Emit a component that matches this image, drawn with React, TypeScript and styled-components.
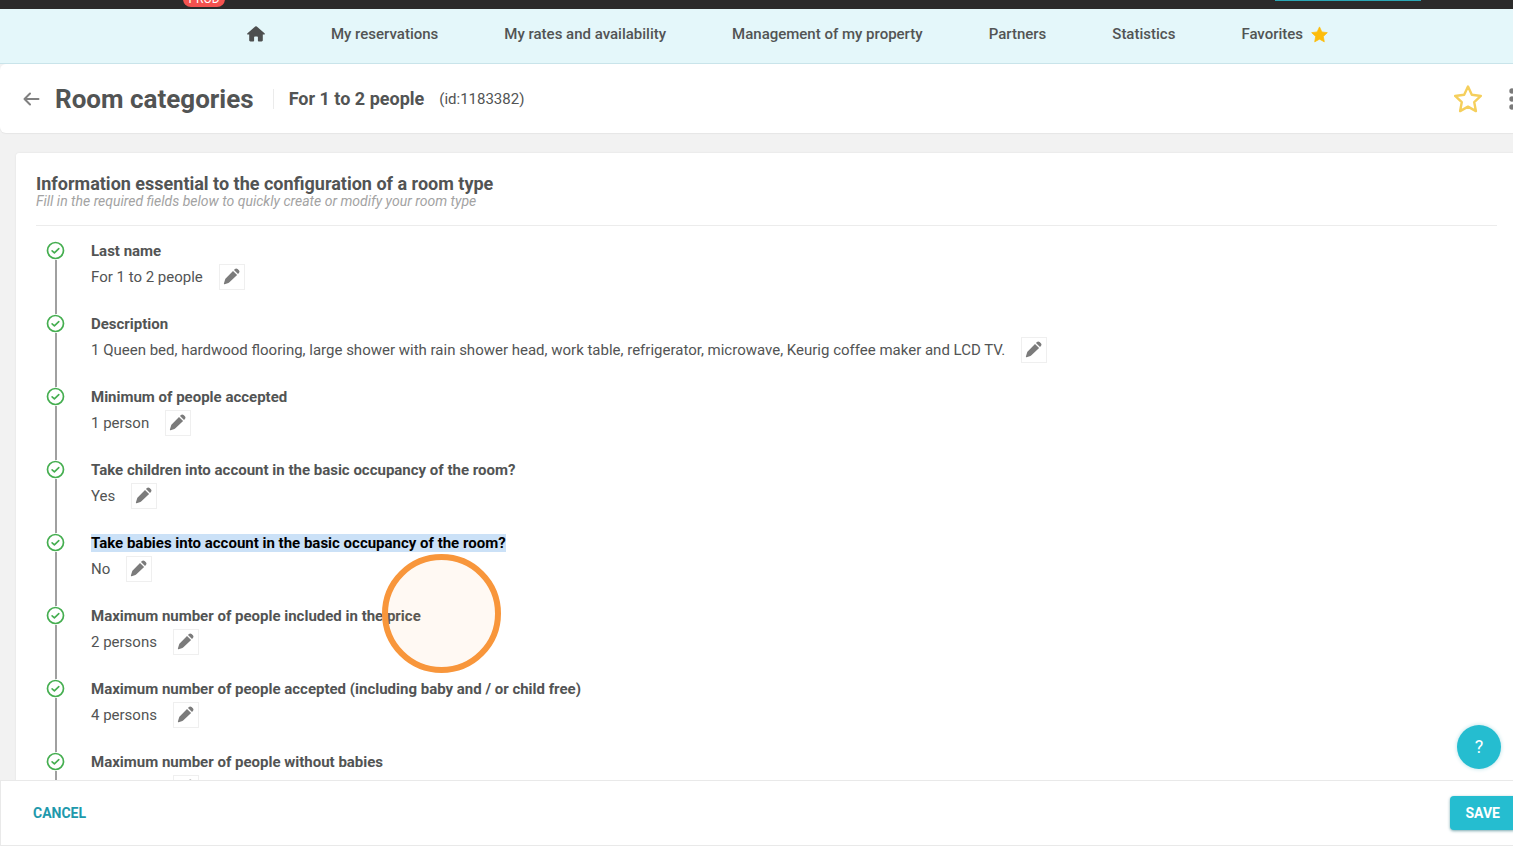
import React from "react";
import styled, { createGlobalStyle } from "styled-components";

const GlobalStyle = createGlobalStyle`
  *, *::before, *::after { box-sizing: border-box; }
  html, body, #root { height: 100%; }
  body {
    margin: 0;
    overflow: hidden;
    background: #f2f2f2;
    color: #525454;
    font-family: Roboto, "Liberation Sans", sans-serif;
    font-size: 15px;
    line-height: 20px;
  }
  button { font: inherit; color: inherit; padding: 0; border: 0; background: none; cursor: pointer; }
  a { color: inherit; text-decoration: none; }
  h1, h2, p, ol { margin: 0; padding: 0; }
  svg { display: block; }
`;

const Viewport = styled.div`
  position: relative;
  height: 100%;
  overflow: hidden;
`;

const Shell = styled.div`
  display: flex;
  flex-direction: column;
  width: calc(100% + 20px);
  height: 100%;
`;

const TopBar = styled.div`
  display: flex;
  flex: none;
  justify-content: space-between;
  align-items: flex-end;
  height: 9px;
  padding: 0 112px 0 183px;
  background: #2b2b2b;
`;

const EnvBadge = styled.span`
  display: flex;
  justify-content: center;
  align-items: center;
  width: 42px;
  height: 16px;
  margin-bottom: 2px;
  border-radius: 8px;
  background: #f4524f;
  color: #fff;
  font-size: 12px;
  line-height: 16px;
`;

const TopAction = styled.span`
  align-self: flex-start;
  width: 146px;
  height: 1px;
  background: #2aa7b5;
`;

const Nav = styled.nav`
  display: flex;
  flex: none;
  justify-content: center;
  align-items: center;
  gap: 66px;
  height: 55px;
  padding: 0 0 4px 42px;
  border-bottom: 1px solid #c9e4ea;
  background: #e4f7fa;
  font-weight: 500;
`;

const NavLink = styled.a`
  display: flex;
  align-items: center;
  gap: 8px;
  white-space: nowrap;
`;

const PageHeader = styled.header`
  display: flex;
  flex: none;
  align-items: center;
  height: 69px;
  padding: 0 18px 0 23px;
  border-radius: 6px;
  background: #fff;
  box-shadow: 0 1px 1px #e6e6e6;
`;

const PageTitle = styled.h1`
  margin-left: 15px;
  padding-right: 19px;
  border-right: 1px solid #ebebeb;
  font-size: 26px;
  font-weight: 700;
  line-height: 20px;
`;

const Subject = styled.span`
  margin-left: 15px;
  font-size: 18px;
  font-weight: 700;
`;

const SubjectId = styled.span`
  flex: 1;
  margin-left: 15px;
`;

const HeaderActions = styled.div`
  display: flex;
  align-items: center;
  gap: 27px;
`;

const Content = styled.main`
  flex: 1;
  min-height: 0;
  overflow: hidden;
  padding: 20px 16px 0;
`;

const Card = styled.section`
  padding: 21px 20px 0;
  border-radius: 3px;
  background: #fff;
  box-shadow: 0 0 2px #dedede;
`;

const CardHeader = styled.div`
  padding-bottom: 17px;
  border-bottom: 1px solid #ececec;
`;

const CardTitle = styled.h2`
  font-size: 18px;
  font-weight: 700;
  line-height: 20px;
`;

const CardHint = styled.p`
  color: #a3a3a3;
  font-size: 14px;
  font-style: italic;
  line-height: 14px;
`;

const Steps = styled.ol`
  padding: 15px 0 0 10px;
  list-style: none;
`;

const Step = styled.li`
  display: flex;
  gap: 26px;
  height: 73px;
`;

const Track = styled.div`
  display: flex;
  flex-direction: column;
  align-items: center;
  width: 19px;

  &::after {
    content: "";
    flex: 1;
    width: 2px;
    background: #a0a0a0;
  }
`;

const StepLabel = styled.div`
  font-weight: 700;
`;

const Mark = styled.mark`
  background: #cbe1f7;
  color: #000;
`;

const StepValue = styled.div`
  display: flex;
  align-items: center;
  gap: 16px;
  height: 32px;
`;

const EditButton = styled.button`
  display: flex;
  justify-content: center;
  width: 26px;
  height: 26px;
  padding: 3px 1px 0 0;
  border: 1px solid #efefef;
`;

const Footer = styled.footer`
  display: flex;
  flex: none;
  justify-content: space-between;
  align-items: center;
  height: 66px;
  padding: 0 16px 0 32px;
  border: 1px solid #e9e9e9;
  background: #fff;
`;

const CancelButton = styled.button`
  color: #1e99ac;
  font-weight: 700;
  font-size: 14px;
`;

const SaveButton = styled.button`
  height: 34px;
  padding: 0 16px;
  border-radius: 4px;
  background: #25bdd0;
  box-shadow: 0 1px 3px #7aa9b0;
  color: #fff;
  font-weight: 700;
  font-size: 14px;
`;

const HelpButton = styled.button`
  position: absolute;
  right: 12px;
  bottom: 77px;
  width: 44px;
  height: 44px;
  border-radius: 50%;
  background: #25bdd0;
  box-shadow: 0 0 4px #b5dfe5;
  color: #fff;
  font-size: 18px;
`;

const ClickRing = styled.div`
  position: absolute;
  left: 382px;
  top: 554px;
  width: 119px;
  height: 119px;
  border: 6px solid #f8963b;
  border-radius: 50%;
  background: rgba(248, 150, 59, 0.06);
  pointer-events: none;
`;

const HomeIcon = () => (
  <svg width="18" height="16" viewBox="0 0 18 16" fill="#4d4f4f">
    <path d="M8.2.5a1.2 1.2 0 0 1 1.6 0l7.7 6.8c.7.6.3 1.3-.4 1.3h-1.3v5.7c0 .7-.5 1.2-1.2 1.2h-2.900c-.5 0-.8-.3-.8-.8v-3.400c0-.5-.3-.8-.8-.8H7.900c-.5 0-.8.3-.8.8v3.400c0 .5-.3.8-.8.8H3.400c-.7 0-1.200-.5-1.200-1.200V8.600H.9C.2 8.600-.2 7.900.5 7.300z" />
  </svg>
);

const STAR = "M12 2.200l3 6.500 7.100.9-5.200 4.900 1.300 7L12 18l-6.200 3.500 1.300-7L1.900 9.600 9 8.700z";

const StarIcon = ({ size, filled }: { size: number; filled?: boolean }) => (
  <svg
    width={size}
    height={size}
    viewBox="1 1 22 22"
    fill={filled ? "#fdbc0b" : "none"}
    stroke={filled ? "#fdbc0b" : "#f5cf5c"}
    strokeWidth={filled ? 1 : 1.9}
    strokeLinejoin="round"
  >
    <path d={STAR} />
  </svg>
);

const BackIcon = () => (
  <svg width="17" height="14" viewBox="0 0 17 14" fill="none" stroke="#808080" strokeWidth="2" strokeLinecap="round" strokeLinejoin="round">
    <path d="M7 1.500L1.500 7L7 12.500M1.500 7H15.500" />
  </svg>
);

const MoreIcon = () => (
  <svg width="6" height="24" viewBox="0 0 6 24" fill="#7a7a7a">
    <circle cx="3" cy="4" r="2.700" />
    <circle cx="3" cy="12" r="2.700" />
    <circle cx="3" cy="20" r="2.700" />
  </svg>
);

const CheckIcon = () => (
  <svg width="19" height="19" viewBox="0 0 19 19" fill="none" stroke="#45ae50" strokeLinecap="round" strokeLinejoin="round">
    <circle cx="9.500" cy="9.500" r="8" strokeWidth="1.700" />
    <path d="M6.100 9.800l2.300 2.100 4.400-4.300" strokeWidth="1.600" />
  </svg>
);

const PencilIcon = () => (
  <svg width="17" height="17" viewBox="0 0 17 17" fill="#7b7b7b">
    <path d="M10 2.900l4.100 4.100-7.400 7c-.4.400-.8.700-1.300.9l-3.800 1.300c-.5.200-.9-.2-.7-.7l1.200-3.900c.2-.5.400-.9.800-1.300z" />
    <path d="M11 1.900l.9-.9c.9-.8 1.900-.8 2.700 0l1.300 1.300c.8.800.8 1.800 0 2.700l-.9.900z" />
  </svg>
);

const navItems = ["My reservations", "My rates and availability", "Management of my property", "Partners", "Statistics"];

const steps = [
  { label: "Last name", value: "For 1 to 2 people" },
  {
    label: "Description",
    value:
      "1 Queen bed, hardwood flooring, large shower with rain shower head, work table, refrigerator, microwave, Keurig coffee maker and LCD TV.",
  },
  { label: "Minimum of people accepted", value: "1 person" },
  { label: "Take children into account in the basic occupancy of the room?", value: "Yes" },
  { label: "Take babies into account in the basic occupancy of the room?", value: "No", selected: true },
  { label: "Maximum number of people included in the price", value: "2 persons" },
  { label: "Maximum number of people accepted (including baby and / or child free)", value: "4 persons" },
  { label: "Maximum number of people without babies", value: "4 persons" },
];

export default function App() {
  return (
    <Viewport>
      <GlobalStyle />
      <Shell>
        <TopBar>
          <EnvBadge>PROD</EnvBadge>
          <TopAction />
        </TopBar>
        <Nav>
          <NavLink href="#home" aria-label="Home">
            <HomeIcon />
          </NavLink>
          {navItems.map((item) => (
            <NavLink key={item} href="#">
              {item}
            </NavLink>
          ))}
          <NavLink href="#favorites">
            Favorites
            <StarIcon size={17} filled />
          </NavLink>
        </Nav>
        <PageHeader>
          <button aria-label="Back">
            <BackIcon />
          </button>
          <PageTitle>Room categories</PageTitle>
          <Subject>For 1 to 2 people</Subject>
          <SubjectId>(id:1183382)</SubjectId>
          <HeaderActions>
            <button aria-label="Add to favorites">
              <StarIcon size={28} />
            </button>
            <button aria-label="More actions">
              <MoreIcon />
            </button>
          </HeaderActions>
        </PageHeader>
        <Content>
          <Card>
            <CardHeader>
              <CardTitle>Information essential to the configuration of a room type</CardTitle>
              <CardHint>Fill in the required fields below to quickly create or modify your room type</CardHint>
            </CardHeader>
            <Steps>
              {steps.map((step) => (
                <Step key={step.label}>
                  <Track>
                    <CheckIcon />
                  </Track>
                  <div>
                    <StepLabel>{step.selected ? <Mark>{step.label}</Mark> : step.label}</StepLabel>
                    <StepValue>
                      {step.value}
                      <EditButton aria-label={`Edit ${step.label}`}>
                        <PencilIcon />
                      </EditButton>
                    </StepValue>
                  </div>
                </Step>
              ))}
            </Steps>
          </Card>
        </Content>
        <Footer>
          <CancelButton>CANCEL</CancelButton>
          <SaveButton>SAVE</SaveButton>
        </Footer>
      </Shell>
      <HelpButton aria-label="Help">?</HelpButton>
      <ClickRing />
    </Viewport>
  );
}
